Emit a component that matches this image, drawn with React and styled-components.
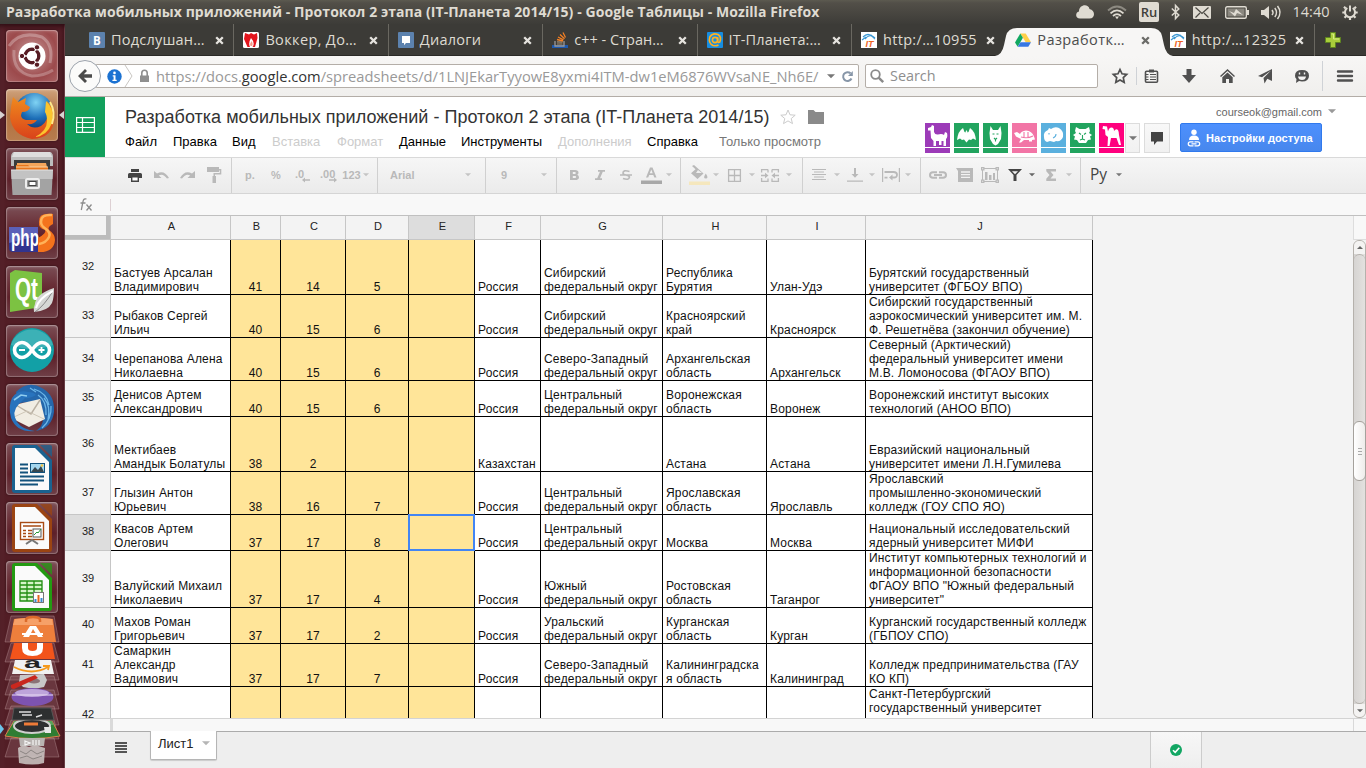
import React from "react";
import styled, { createGlobalStyle, css } from "styled-components";

const Global = createGlobalStyle`
  * { box-sizing: border-box; }
  body { margin: 0; background: #fff; overflow: hidden; font-family: "Liberation Sans", Arial, sans-serif; }
  svg { display: block; flex: none; overflow: visible; }
`;

/* ---------- desktop shell ---------- */
const Screen = styled.div`
  width: 1366px;
  height: 768px;
  display: flex;
  flex-direction: column;
  overflow: hidden;
`;
const Panel = styled.header`
  height: 24px;
  flex: none;
  display: flex;
  align-items: center;
  padding-left: 6px;
  background: linear-gradient(#5c5a50 0, #524f48 3px, #3d3c38 24px);
  color: #dfdbd2;
  font-family: "Open Sans", sans-serif;
`;
const WindowTitle = styled.div`
  width: 1069px;
  font-size: 14px;
  font-weight: 700;
  line-height: 24px;
  letter-spacing: 0.077px;
  white-space: nowrap;
`;
const Indicator = styled.div`
  width: ${(p) => p.$w}px;
  height: 24px;
  display: flex;
  align-items: center;
  justify-content: center;
  color: #dfdbd2;
`;
const Clock = styled.span`
  font-size: 14.500px;
  line-height: 24px;
`;
const Lang = styled.span`
  width: 20px;
  height: 20px;
  border-radius: 2px;
  background: #dfdbd2;
  color: #403f3a;
  font-size: 13px;
  font-weight: 600;
  line-height: 20px;
  text-align: center;
`;
const Body = styled.div`
  flex: 1;
  min-height: 0;
  display: flex;
`;
const Launcher = styled.nav`
  width: 65px;
  flex: none;
  padding: 6px 0 0;
  display: flex;
  flex-direction: column;
  background: linear-gradient(90deg, rgba(255, 255, 255, 0.03), transparent 6px, transparent 60px, rgba(30, 0, 10, 0.25)), #521d25;
  box-shadow: inset 0 5px 5px -3px #2c0c12, inset -1px 0 #6e4349;
`;
const TileRow = styled.div`
  height: 59px;
  flex: none;
  display: flex;
  align-items: flex-start;
`;
const Pip = styled.div`
  width: 6px;
  height: 52px;
  display: flex;
  align-items: center;
  justify-content: ${(p) => (p.$end ? "flex-end" : "flex-start")};
`;
const Tile = styled.div`
  width: 52px;
  height: 52px;
  border-radius: 4px;
  background: ${(p) => p.$bg || "linear-gradient(#7b4f56, #6a3038 35%, #5d2029 60%, #6f3f47)"};
  box-shadow: inset 0 0 0 1px rgba(255, 255, 255, 0.2), inset 0 1px 3px rgba(255, 255, 255, 0.3), 0 0 2px rgba(0, 0, 0, 0.5);
`;
const Browser = styled.main`
  width: 1301px;
  display: flex;
  flex-direction: column;
`;

/* ---------- browser chrome ---------- */
const TabStrip = styled.div`
  height: 32px;
  flex: none;
  padding-left: 15px;
  display: flex;
  background: #3c3b37;
  border-bottom: 1px solid #2b2a27;
  font-family: "Open Sans", sans-serif;
`;
const TabBox = styled.div`
  width: 154.4px;
  height: 32px;
  flex: none;
  position: relative;
  display: flex;
  align-items: center;
  padding: 4px 0 4px 9px;
  color: ${(p) => (p.$active ? "#4c4c4c" : "#dfdbd2")};
  border-right: ${(p) => (p.$noline ? "0" : "1px solid #6a6861")};
`;
const TabShape = styled.svg`
  position: absolute;
  left: -11px;
  top: 3px;
`;
const Favicon = styled.div`
  width: 16px;
  height: 16px;
  margin-right: 6px;
  flex: none;
  position: relative;
`;
const TabLabel = styled.span`
  width: 102px;
  flex: none;
  position: relative;
  font-size: 14.5px;
  line-height: 20px;
  letter-spacing: ${(p) => p.$ls || 0}px;
  white-space: nowrap;
`;
const TabClose = styled.span`
  position: relative;
  width: 12px;
  display: flex;
  justify-content: center;
`;
const NewTab = styled.div`
  width: 36px;
  display: flex;
  align-items: center;
  justify-content: center;
`;
const NavBar = styled.div`
  height: 41px;
  flex: none;
  display: flex;
  align-items: center;
  background: linear-gradient(#f7f6f5, #f0efed);
  border-bottom: 1px solid #b3ada7;
  font-family: "Open Sans", sans-serif;
`;
const BackButton = styled.div`
  width: 32px;
  height: 32px;
  flex: none;
  margin-left: 4px;
  position: relative;
  border-radius: 50%;
  border: 1px solid #9ca3ac;
  background: #fbfbfa;
  display: flex;
  align-items: center;
  justify-content: center;
`;
const UrlBar = styled.div`
  width: 764px;
  height: 24px;
  margin-left: -6px;
  flex: none;
  display: flex;
  align-items: center;
  padding-left: 11px;
  background: #fff;
  border: 1px solid #b4aea8;
  border-radius: 2px;
`;
const Url = styled.span`
  width: 666px;
  margin-left: 6px;
  overflow: hidden;
  font-size: 14.7px;
  line-height: 22px;
  white-space: nowrap;
  color: #999;
  b { font-weight: 400; color: #333; }
`;
const UrlTool = styled.span`
  width: 17px;
  display: flex;
  justify-content: center;
`;
const SearchBar = styled.div`
  width: 233px;
  height: 24px;
  margin-left: 6px;
  margin-right: 6px;
  flex: none;
  display: flex;
  align-items: center;
  gap: 6px;
  padding-left: 4px;
  background: #fff;
  border: 1px solid #b4aea8;
  border-radius: 2px;
  color: #8e8e8e;
  font-size: 14.4px;
  line-height: 22px;
`;
const NavTool = styled.div`
  width: ${(p) => p.$w || 38}px;
  display: flex;
  align-items: center;
  justify-content: center;
  color: #505050;
`;
const NavLine = styled.div`
  width: 1px;
  height: ${(p) => p.$h}px;
  background: #cfd2d6;
`;

/* ---------- document header ---------- */
const DocHeader = styled.section`
  height: 60px;
  flex: none;
  display: flex;
  background: #fff;
`;
const SheetLogo = styled.div`
  width: 40px;
  height: 60px;
  padding-bottom: 4px;
  display: flex;
  align-items: center;
  justify-content: center;
  background: #12a05c;
`;
const DocInfo = styled.div`
  width: 820px;
  padding-left: 20px;
`;
const TitleRow = styled.div`
  display: flex;
  align-items: center;
  height: 40px;
`;
const DocTitle = styled.h1`
  margin: 0;
  width: 655px;
  font-size: 18px;
  font-weight: 400;
  line-height: 40px;
  letter-spacing: 0.018px;
  color: #333;
  white-space: nowrap;
`;
const MenuRow = styled.div`
  display: flex;
  height: 15px;
  margin-top: -3px;
`;
const MenuItem = styled.span`
  width: ${(p) => p.$w}px;
  flex: none;
  font-size: 13px;
  line-height: 15px;
  white-space: nowrap;
  color: ${(p) => (p.$off ? "#ccc" : p.$note ? "#777" : "#000")};
`;
const Account = styled.div`
  width: 441px;
`;
const Mail = styled.div`
  height: 26px;
  padding: 3px 30px 0 0;
  display: flex;
  align-items: center;
  justify-content: flex-end;
  gap: 6px;
  font-size: 11px;
  color: #666;
`;
const Collab = styled.div`
  display: flex;
  align-items: flex-start;
`;
const Avatar = styled.div`
  width: 25px;
  height: 30px;
  margin-right: 4px;
  background: linear-gradient(${(p) => p.$c} 24px, #fff 24px, #fff 25px, ${(p) => p.$c} 25px);
`;
const GreyButton = styled.div`
  width: ${(p) => p.$w}px;
  height: 30px;
  margin-left: ${(p) => p.$ml}px;
  display: flex;
  align-items: center;
  justify-content: center;
  border: 1px solid #dcdcdc;
  background: linear-gradient(#f8f8f8, #f1f1f1);
`;
const Share = styled.div`
  width: 142px;
  height: 29px;
  margin-left: 10px;
  padding-left: 6px;
  display: flex;
  align-items: center;
  gap: 5px;
  border: 1px solid #3079ed;
  border-radius: 2px;
  background: linear-gradient(#4d90fe, #4787ed);
  color: #fff;
  font-size: 11px;
  font-weight: 700;
  letter-spacing: 0.08px;
  white-space: nowrap;
`;

/* ---------- toolbar ---------- */
const Toolbar = styled.div`
  height: 37px;
  flex: none;
  display: flex;
  border-top: 1px solid #d9d9d9;
  border-bottom: 1px solid #d5d5d5;
  background: linear-gradient(#f6f6f6, #ebebeb);
`;
const Group = styled.div`
  display: flex;
  width: ${(p) => p.$w}px;
  flex: none;
  padding-left: ${(p) => p.$pl || 0}px;
  border-right: ${(p) => (p.$last ? "0" : "1px solid #d0d0d0")};
`;
const Slot = styled.div`
  width: ${(p) => p.$w}px;
  height: 34px;
  flex: none;
  display: flex;
  align-items: center;
  justify-content: ${(p) => (p.$left ? "flex-start" : "center")};
  color: ${(p) => (p.$dark ? "#444" : "#b9b9b9")};
  font-size: 11px;
  font-weight: 700;
  white-space: nowrap;
`;
const PySign = styled.span`
  font-family: "Open Sans", sans-serif;
  font-size: 15.5px;
  font-weight: 400;
  color: #444;
  padding: 0 3px 3px 0;
`;
const FormulaBar = styled.div`
  height: 22px;
  flex: none;
  display: flex;
  align-items: center;
  padding-left: 14px;
  background: #f8f8f8;
  border-bottom: 1px solid #c0c0c0;
`;
const Caret = styled.div`
  width: 1px;
  height: 12px;
  margin-left: 17px;
  background: #ddd0d3;
`;

/* ---------- grid ---------- */
const SheetArea = styled.div`
  height: 502px;
  flex: none;
  display: flex;
  background: #f3f3f3;
`;
const Sheet = styled.div`
  width: 1288px;
  height: 502px;
  overflow: hidden;
`;
const HeadRow = styled.div`
  display: flex;
  height: 24px;
  width: 1028px;
`;
const Corner = styled.div`
  width: 46px;
  border-right: 1px solid #c6c6c6;
  border-bottom: 1px solid #c6c6c6;
  background: #f3f3f3;
  box-shadow: inset -4px -4px #bcbcbc;
`;
const HeadCell = styled.div`
  width: ${(p) => p.$w}px;
  padding-left: 2px;
  border-right: 1px solid #c6c6c6;
  border-bottom: 1px solid #c6c6c6;
  background: ${(p) => (p.$on ? "#ddd" : "#f3f3f3")};
  font-size: 11px;
  line-height: 21px;
  text-align: center;
  color: #222;
`;
const GridRow = styled.div`
  display: flex;
  height: ${(p) => p.$h}px;
  width: 1028px;
`;
const RowHead = styled.div`
  width: 46px;
  display: flex;
  align-items: center;
  justify-content: center;
  border-right: 1px solid #c6c6c6;
  border-bottom: 1px solid #c6c6c6;
  background: ${(p) => (p.$on ? "#ddd" : "#f3f3f3")};
  font-size: 11px;
  padding: 0 0 3px 1px;
  color: #222;
`;
const Cell = styled.div`
  width: ${(p) => p.$w}px;
  flex: none;
  position: relative;
  display: flex;
  flex-direction: column;
  justify-content: ${(p) => (p.$top ? "flex-start" : "flex-end")};
  padding: 0 0 0 3px;
  border-right: 1px solid #000;
  border-bottom: 1px solid #000;
  background: ${(p) => (p.$fill ? "#ffe599" : "#fff")};
  font-size: 12px;
  line-height: 14px;
  letter-spacing: 0.18px;
  white-space: pre;
  color: #111;
  ${(p) => p.$fill && css`padding: 0; text-align: center; letter-spacing: 0;`}
  ${(p) =>
    p.$selected &&
    css`
      &::after {
        content: "";
        position: absolute;
        inset: -1px;
        border: 2px solid #4285f4;
        z-index: 1;
      }
    `}
`;
const Scroll = styled.div`
  width: 13px;
  height: 502px;
  display: flex;
  flex-direction: column;
`;
const ScrollCap = styled.div`
  height: 24px;
  background: #f8f8f8;
  border-left: 1px solid #ddd;
  border-bottom: 1px solid #ddd;
`;
const ScrollTrack = styled.div`
  height: 478px;
  display: flex;
  flex-direction: column;
  border: 1px solid #b5b1ac;
  border-radius: 6px;
  background: linear-gradient(90deg, #d6d4d2, #e3e1df);
`;
const ScrollArrow = styled.div`
  height: 13px;
  display: flex;
  align-items: center;
  justify-content: center;
  background: #f4f3f2;
  border-radius: ${(p) => (p.$up ? "5px 5px 0 0" : "0 0 5px 5px")};
`;
const ScrollGap = styled.div`
  flex: ${(p) => p.$f} 0 0;
  border: 0 solid #b5b1ac;
  border-radius: ${(p) => (p.$up ? "6px 6px 0 0" : "0 0 6px 6px")};
  border-top-width: ${(p) => (p.$up ? 1 : 0)}px;
  border-bottom-width: ${(p) => (p.$up ? 0 : 1)}px;
`;
const Thumb = styled.div`
  height: 60px;
  margin: 0 -1px;
  display: flex;
  flex-direction: column;
  align-items: center;
  justify-content: center;
  gap: 2px;
  border: 1px solid #a5a19c;
  border-radius: 6px;
  background: linear-gradient(90deg, #fff, #eeecea);
  i { width: 4px; height: 1px; background: #aaa; }
`;

/* ---------- footer ---------- */
const ScrollFooter = styled.div`
  height: 13px;
  flex: none;
  display: flex;
  padding-left: 45px;
  border-top: 1px solid #d3d3d3;
  background: #f8f8f8;
`;
const FootGrip = styled.div`
  width: 3px;
  background: #dadada;
`;
const FootCorner = styled.div`
  margin-left: 1240px;
  width: 13px;
  border-left: 1px solid #d9d9d9;
`;
const SheetTabs = styled.footer`
  flex: 1;
  display: flex;
  align-items: flex-start;
  background: #eee;
  border-top: 1px solid #ababab;
`;
const AllSheets = styled.div`
  width: 85px;
  padding: 10px 0 0 50px;
`;
const SheetTab = styled.div`
  width: 67px;
  height: 29px;
  margin-top: -1px;
  padding: 0 0 3px 7px;
  display: flex;
  align-items: center;
  gap: 9px;
  background: #fff;
  border: 1px solid #b5b5b5;
  border-top: 0;
  border-radius: 0 0 2px 2px;
  box-shadow: 0 1px 1px rgba(0, 0, 0, 0.15);
  font-size: 13px;
  color: #222;
  span { width: 35px; }
`;
const SaveState = styled.div`
  width: 52px;
  height: 37px;
  margin-left: 933px;
  padding-bottom: 2px;
  display: flex;
  align-items: center;
  justify-content: center;
  background: linear-gradient(#f7f7f7, #eee);
  border-left: 1px solid #ccc;
  border-right: 1px solid #ccc;
`;

/* ---------- drawings ---------- */
const Ico = ({ w = 16, h = 16, vb, children, ...r }) => (
  <svg width={w} height={h} viewBox={vb || `0 0 ${w} ${h}`} fill="currentColor" {...r}>{children}</svg>
);
const Down = ({ c = "#c4c4c4", w = 6 }) => (
  <svg width={w} height={w / 2 + 0.5} viewBox="0 0 8 4"><path d="M0 0h8L4 4z" fill={c} /></svg>
);

const IndicatorIcons = {
  cloud: <Ico w={18} h={14}><path d="M4 13.5C-1 13.5-.8 7.3 3 6.6 3-1 12.5-1.600 13.500 4c6 1 6 9.500 0 9.500z" /></Ico>,
  wifi: (
    <Ico w={20} h={15} fill="none" stroke="currentColor" strokeWidth="1.800">
      <path d="M1 5.500Q10-2.500 19 5.500" stroke="#8d8a82" /><path d="M3.500 8.300Q10 2.500 16.500 8.300" /><path d="M6 11Q10 7.300 14 11" /><path d="M8 11.600h4l-2 2.600z" fill="currentColor" stroke="none" />
    </Ico>
  ),
  bt: <Ico w={9} h={16} fill="none" stroke="currentColor" strokeWidth="1.500"><path d="M.8 4.500l7 6.500-3.300 3.500V1.500L7.800 5l-7 6.500" /></Ico>,
  mail: <Ico w={18} h={13}><rect width="18" height="13" rx="1" /><path d="M2.500 1.500L9 7.500l6.500-6M2.500 11.500l4.500-4.500M15.500 11.500L11 7" stroke="#4a4842" strokeWidth="1.200" fill="none" /></Ico>,
  battery: <Ico w={24} h={13}><rect x=".7" y=".7" width="20.600" height="11.600" rx="1.500" fill="none" stroke="currentColor" strokeWidth="1.400" /><rect x="22" y="4" width="2" height="5" /><rect x="2.500" y="2.500" width="17" height="8" fill="#8a877f" /><path d="M4 5l5 2 2-4 7 6-6-2-2 3.500z" /></Ico>,
  sound: <Ico w={20} h={15}><path d="M0 5h3l5-4v13l-5-4H0z" /><path d="M11 5q2 2.500 0 5M13.800 3q3.400 4.500 0 9M16.500 1q5 6.500 0 13" fill="none" stroke="currentColor" strokeWidth="1.500" /></Ico>,
  gear: (
    <Ico w={16} h={16} fill="none" stroke="currentColor">
      <path d="M5.300 4a5 5 0 1 0 5.400 0" strokeWidth="2" />
      <path d="M8 1.500v6" strokeWidth="2" />
      <path d="M3.700 4.500L2 2.800M12.300 4.500L14 2.800M3 8.500H.3M13 8.500h2.700M4.300 12l-1.800 1.800M11.700 12l1.800 1.800M8 13.500V16" strokeWidth="2.200" />
    </Ico>
  ),
};

const ItLogo = () => (
  <Ico>
    <rect width="16" height="16" fill="#fff" />
    <path d="M2 5q5-5 10 0M4 7q5-6 10-1M1 8l4-3M10 3l4 4" stroke="#3a97d3" strokeWidth="1.200" fill="none" />
    <text x="4.500" y="14.500" fontSize="9" fontWeight="700" fontStyle="italic" fill="#f0641e" fontFamily="Liberation Sans">IT</text>
  </Ico>
);
const favicons = {
  vk: <Ico><rect width="16" height="16" rx="1" fill="#5c82ae" /><text x="4" y="12.500" fontSize="11.500" fontWeight="700" fill="#fff" fontFamily="Open Sans">B</text></Ico>,
  fire: <Ico><rect width="16" height="16" rx="1.500" fill="#fff" /><path d="M2 1l4 1.500L8 1l3 1.500L14 1l.5 5L12 15H9.500q3-4-1.500-9-3 5-1 9H4.500L1 7z" fill="#e3151d" /><path d="M8.500 9q2 3 .5 5H7.500q-1-2.500 1-5z" fill="#f59a8a" /></Ico>,
  chat: <Ico><rect width="16" height="16" rx="1" fill="#5c82ae" /><path d="M4 4h8v7H8l-2 2.300V11H4z" fill="#fff" /></Ico>,
  so: <Ico><path d="M0 14.500h16" stroke="#1d5ab0" strokeWidth="3" /><path d="M3 9v5h9V9" fill="none" stroke="#999" strokeWidth="1.300" /><path d="M5 12h5.500M5 9.800l5.500.4" stroke="#a39076" strokeWidth="1.200" /><path d="M5 7.500l6 1.500M6 5l5.500 2.800M8 2.500l4.500 4.200M11 .5l2.500 5" stroke="#f48024" strokeWidth="1.300" /></Ico>,
  at: <Ico><rect width="16" height="16" rx="1" fill="#168de2" /><circle cx="8" cy="8" r="2.600" fill="none" stroke="#ffb01f" strokeWidth="1.600" /><path d="M10.700 5.300v4q.3 1.800 2 .8Q15 5 11 2.500 5.500.5 2.800 5 1 11 6 13.500q3 .8 5.500-.5" fill="none" stroke="#ffb01f" strokeWidth="1.600" /></Ico>,
  it: <ItLogo />,
  drive: <Ico><path d="M5.300 1.500h5.400L16 10.200h-5.300z" fill="#ffcf48" /><path d="M5.300 1.500L0 10.400l2.700 4.300 5.200-8.900z" fill="#11a861" /><path d="M5.500 10.200H16l-2.700 4.500H2.700z" fill="#3777e3" /></Ico>,
};
const Cross = ({ c }) => <svg width="9" height="9" viewBox="0 0 9 9"><path d="M1.200 1.200l6.600 6.600M7.800 1.200L1.200 7.800" stroke={c} strokeWidth="2.300" /></svg>;

const tabs = [
  ["vk", "Подслушан…", 0.22], ["fire", "Воккер, До…", 0.36], ["chat", "Диалоги", 0.25], ["so", "c++ - Стран…", 0.03],
  ["at", "IT-Планета:…", 0.12], ["it", "http:/…10955", 0.33], ["drive", "Разработк…", 0.4], ["it", "http:/…12325", 0.4],
];

const LibreDoc = ({ c, d, children }) => (
  <Ico w={52} h={52}>
    <path d="M9 2h22l15 15v30q0 3-3 3H9q-3 0-3-3V5q0-3 3-3z" fill={c} />
    <path d="M34 2h10q2 0 2 2v10z" fill={c} opacity=".75" />
    <path d="M9 5h20l14 14v28H9z" fill="#fafafa" /><path d="M29 5v0l14 14z" fill={d} />
    {children}
  </Ico>
);
const launcherItems = [
  {
    bg: "radial-gradient(circle at 50% 45%, #c99a9a, #9c4a4c 65%, #a96163)",
    art: <Ico w={52} h={52}>
      <path d="M3 16Q14 0 36 7q12 8 8 26" fill="none" stroke="#fff" strokeOpacity=".28" strokeWidth="3" />
      <path d="M8 20q-2 22 18 26 12 0 21-6" fill="none" stroke="#fff" strokeOpacity=".25" strokeWidth="3" />
      <circle cx="26" cy="26" r="13.500" fill="#fff" />
      <circle cx="26" cy="26" r="6.800" fill="none" stroke="#571c24" strokeWidth="3.400" />
      <path d="M26 26h-10M26 26l5-8.700M26 26l5 8.700" stroke="#fff" strokeWidth="1.300" />
      <circle cx="26" cy="26" r="5" fill="#fff" />
      {[[16, 26], [31, 17.300], [31, 34.700]].map(([x, y]) => <circle key={y} cx={x} cy={y} r="2.700" fill="#571c24" stroke="#fff" strokeWidth="1" />)}
    </Ico>,
  },
  {
    bg: "linear-gradient(#cfa27c, #b0713f 50%, #b87c4e)", left: true, right: true,
    art: <Ico w={52} h={52}>
      <defs><radialGradient id="globe" cx=".55" cy=".25" r=".7"><stop offset="0" stopColor="#7fd3f4" /><stop offset=".6" stopColor="#1d6fb8" /><stop offset="1" stopColor="#123a78" /></radialGradient>
        <linearGradient id="fox" x1="0" y1="0" x2="0" y2="1"><stop offset="0" stopColor="#f08a1d" /><stop offset="1" stopColor="#d9421b" /></linearGradient></defs>
      <circle cx="28" cy="23" r="19" fill="url(#globe)" />
      <path d="M5 18L7 8l5 5 8-4-1 6 5 3q-1 5-8 5l-1 3q0 4 5 5 6 0 11 0-3 5-10 4 6 6 14 2 8-5 7-17l-1-8q7 7 7 17 0 20-22 21Q6 46 4 28z" fill="url(#fox)" />
      <path d="M40 12q9 8 6 22-5 13-17 14 12-6 12-16 0-6-2-9z" fill="#fbc52e" />
      <path d="M44 13q6 10 2 22" fill="none" stroke="#ffe98a" strokeWidth="2" />
    </Ico>,
  },
  {
    art: <Ico w={52} h={52}>
      <path d="M8 4h36q2 0 3 4v10H5V8q1-4 3-4z" fill="#bdbdbd" /><path d="M8 4h36l2 5H6z" fill="#dedede" />
      <rect x="8" y="12" width="36" height="13" fill="#3b3b3b" /><path d="M11 15h29l1 4H11z" fill="#f3a65b" /><path d="M10 17h12l2 2h18v4H10z" fill="#e8761b" /><path d="M10 19h32" stroke="#fbd5a5" />
      <path d="M5 22h42l-1.500 25h-39z" fill="#a3a3a3" /><path d="M5 22h42l-.5 9h-41z" fill="#c3c3c3" /><path d="M5 22h42" stroke="#e4e4e4" />
      <rect x="20" y="31" width="13" height="9" rx="1.500" fill="#999" stroke="#eee" strokeWidth="2" /><rect x="23" y="33.500" width="7" height="4" fill="#fff" stroke="#444" />
    </Ico>,
  },
  {
    art: <Ico w={52} h={52}>
      <path d="M3 20h29v25H7q-4 0-4-4z" fill="#31348f" /><path d="M3 20h29v9q-14 3-29 7z" fill="#5b60b8" />
      <text x="5" y="39" fontSize="23" fontWeight="700" fill="#fff" fontFamily="Liberation Sans" textLength="28" lengthAdjust="spacingAndGlyphs">php</text>
      <path d="M47 7q-15-2-14 8-1 6 6 8 2 3-7 8v14q16 1 17-12 0-6-6-10-2-3 4-6z" fill="#f4731c" /><path d="M46 8q-11-1-11 7 0 4 5 7 5 4 3 8-3 6-10 7" fill="none" stroke="#ffb35a" strokeWidth="2.500" />
    </Ico>,
  },
  {
    art: <Ico w={52} h={52}>
      <path d="M4 7l5-3 27 3v34L4 46z" fill="#7cc242" />
      <text x="9" y="34" fontSize="31" fontWeight="700" fill="#fff" fontFamily="Liberation Sans" textLength="23" lengthAdjust="spacingAndGlyphs">Qt</text>
      <path d="M48 22q-18 6-19 16-2 4-1 8 14-1 18-9 2-5 2-15z" fill="#d5d7d5" /><path d="M29 46q9-6 18-21" stroke="#888" fill="none" /><path d="M47 25q-14 7-17 17" stroke="#fff" fill="none" strokeWidth="2" />
    </Ico>,
  },
  {
    art: <Ico w={52} h={52}>
      <circle cx="26" cy="25" r="22" fill="#12a0a6" /><path d="M5 20a22 22 0 0 1 42 0q-20 8-42 0z" fill="#fff" opacity=".18" />
      <path d="M26 25q-5-7.500-10-7.500a7.500 7.500 0 0 0 0 15q5 0 10-7.500t10-7.500a7.500 7.500 0 0 1 0 15q-5 0-10-7.500z" fill="none" stroke="#fff" strokeWidth="3.600" />
      <path d="M13 25h6M32.500 25h6M35.500 22v6" stroke="#fff" strokeWidth="1.800" />
    </Ico>,
  },
  {
    art: <Ico w={52} h={52}>
      <path d="M10 8Q22-4 36 4q13 7 12 24-2 16-18 19 7-5 7-12l-5-18-18 2z" fill="#2567ab" />
      <path d="M8 21l26-6 5 20-16 8-16-8z" fill="#f1ede3" /><path d="M10 21l15 9 9-14" fill="none" stroke="#b9b0a2" strokeWidth="1.400" /><path d="M8 33l13-6 17 8" fill="none" stroke="#cfc7b8" />
      <path d="M6 14Q12 5 22 8q6 0 8 3-6 4-11 3l-6 6q-8 8-2 18 6 8 18 9Q11 49 5 34 2 22 6 14z" fill="#2873bd" />
      <path d="M28 5q13 4 15 16M32 11q9 6 8 20M24 4l6 4M45 22q1 13-9 22M38 14q7 8 4 22" fill="none" stroke="#6db6e8" strokeWidth="1.300" /><path d="M8 16l7-5 6 1" stroke="#8fcdf0" strokeWidth="1.600" fill="none" />
    </Ico>,
  },
  {
    art: <LibreDoc c="#1a6290" d="#b9d8ea">
      <path d="M14 21.500h8M14 25.500h8M14 29.500h8M14 33.500h24M14 37.500h24M14 41.500h18" stroke="#12527c" strokeWidth="1.800" /><rect x="24.500" y="20.500" width="14" height="9" fill="#a4d6ee" stroke="#12527c" /><path d="M25 29l4-5 3 3 3-4 3 6z" fill="#37474f" /><circle cx="36" cy="22.500" r="1.300" fill="#f4c542" />
    </LibreDoc>,
  },
  {
    art: <LibreDoc c="#9b4412" d="#e8c3a6">
      <rect x="14.500" y="20.500" width="23" height="17" fill="#fff" stroke="#a84b14" strokeWidth="1.400" /><path d="M17 24h18M17 28.500h3M17 31.500h3M17 34.500h3M22 28.500h4M22 31.500h4M22 34.500h4" stroke="#a84b14" strokeWidth="1.600" /><rect x="27" y="27" width="8" height="8" fill="#fff" stroke="#555" /><path d="M28 33l3-3 1 1 3-4" stroke="#2a9a3a" fill="none" /><path d="M20 42l6-4 6 4" fill="none" stroke="#777" strokeWidth="2" />
    </LibreDoc>,
  },
  {
    art: <LibreDoc c="#239a12" d="#bfe6b5">
      <rect x="14" y="20" width="22" height="20" fill="#d5f5c8" /><path d="M14 20h22v20H14zM14 24h22M14 28h22M14 32h22M14 36h22M21 20v20M28 20v20" fill="none" stroke="#1f8d10" strokeWidth="1.300" /><rect x="27.500" y="31.500" width="10" height="10" fill="#fff" stroke="#777" /><path d="M29.500 41v-3M35.500 41v-4" stroke="#3a8ad0" strokeWidth="2" /><path d="M32.500 41v-7" stroke="#e8641e" strokeWidth="2" />
    </LibreDoc>,
  },
];

/* Receding pile of icons at the foot of the launcher. */
const FoldedStack = () => (
  <svg width="65" height="148" viewBox="0 620 65 148">
    {[616, 643, 661, 676, 690, 706, 720, 738].map((y, i) => (
      <path key={y} d={`M11 ${y}h${43}l5 ${i ? 19 : 26}H5z`} fill="#a67b80" fillOpacity=".28" stroke="#c9a5a8" strokeOpacity=".35" />
    ))}
    <path d="M14 643h38l3 16H10z" fill="#f2541b" /><path d="M22 643v5q0 8 10.500 8T43 648v-5h-6v5q0 3-4.500 3t-4.500-3v-5z" fill="#fff" />
    <path d="M14 619q19-3 39 0l3 23H10z" fill="#ee7f3c" /><path d="M15 619q19-2 37 0l1 6H13z" fill="#f6a068" />
    <path d="M26 622v-2q0-3 7-3t7 3v2" fill="none" stroke="#dc6b2b" strokeWidth="2.500" />
    <path d="M23 637l7-11h6l7 11h-5l-5-8-4 8zM22 633h21v2H22z" fill="#fff" />
    <path d="M15 660h36l3 14H12z" fill="#f1f1f1" /><text x="24" y="668" fontSize="15" fontWeight="700" fill="#222" fontFamily="Liberation Sans" textLength="17" lengthAdjust="spacingAndGlyphs">a</text>
    <path d="M14 667q18 9 34 0M43 666h6l-1 4" fill="none" stroke="#f59a1c" strokeWidth="1.800" />
    <path d="M20 675l24-1 3 6-3 7-10 2-11-2-4-5z" fill="#c8c8c8" /><ellipse cx="34" cy="681" rx="6" ry="2.500" fill="#8a7376" /><path d="M11 685l24-10 3 3-24 11q-4 0-3-4z" fill="#c9271e" />
    <ellipse cx="32.500" cy="697" rx="21" ry="9" fill="#7d53b0" /><ellipse cx="32" cy="693" rx="17" ry="4" fill="#d9c8ec" opacity=".7" /><path d="M12 695h41" stroke="#e9dcf5" />
    <path d="M14 721h38l8 15q-28 5-55 0z" fill="#2f7d33" stroke="#d9804a" /><path d="M14 721h38l2 4H12z" fill="#5aa35b" />
    <ellipse cx="32" cy="726" rx="18" ry="7" fill="#2e2f31" stroke="#cfcfcf" strokeWidth="2" /><path d="M24 724h14" stroke="#ee7b38" strokeWidth="3" /><path d="M44 727h7v6h-6z" fill="#e7e7e7" />
    <path d="M14 708h37l3 12H12z" fill="#2d2f30" stroke="#555" /><path d="M19 712h12M22 715h10M36 717l6-2" stroke="#ddd" strokeWidth="1.500" />
    <path d="M19 738h26l-1 8H20z" fill="#b9b4b2" /><path d="M25 741l5 2-5 2zM33 740v5M36 740v5M39 740v5" stroke="#f5f5f5" fill="none" strokeWidth="1.200" />
    <path d="M18 748l5-3 6 2 6-2 10 3-1 15q-11 3-25 0z" fill="#cfcac8" opacity=".85" /><path d="M20 751l6 3 5-4 6 4 7-3M20 758l7-2 6 3 9-3" stroke="#8c8583" fill="none" />
    <path d="M0 724l4 5-4 5z" fill="#6cc5ea" />
  </svg>
);

/* Each anonymous visitor: tile colour, body, and face lines cut out of it. */
const animals = [
  ["#9c3bb8", "M3 5l3-1 1-2 2 1v6q1 3 4 2.500 4-1 6 .5l1-3 2 1q1 4-1 6v7h-2.500v-5h-2v4H14v-4h-3v5H8.500v-5L6 15 5.500 7.500 3 7.500z", ""],
  ["#22a45f", "M3 17Q4 8 9 5l1.500 4 1 .5.5-2h1l.5 2 1-.5L16 5q5 3 6 12l-3-1.500-2 1.500-2-.5-2.500 3-2.500-3-2 .5L6 15.500z", ""],
  ["#22a45f", "M7.500 3l2.500 4h5l2.500-4 1 7-.5 6-3 5-2.500 1.500L10 21l-3-5-.5-6z", "M9.500 11h2M13.500 11h2M11 15l1.500 1.500L14 15M12.500 16.500v2"],
  ["#f275a6", "M2 10l3-1 3 2q1-3 6-3.500 6 .5 8 6l1 3-3 .5v1.500h-3V17h-5l-3 2.500H7L9 16l-5-2.500z", "M9 14q6 2 12-1M12 9v6M16 9v6"],
  ["#5bb0de", "M3 14q-1-5 4-7l1-2 2 1q4-3 8-1 5 3 4 9-2 5-7 4l-2 1-4-1-3 1q-3-1-3-5z", "M8 10v1.500M12 15q3-1 3-4"],
  ["#22a45f", "M6 4l3.500 2h6L19 4l1 4-1 2 3 2-2 1.500 1 3-3 .5-2 3h-7l-2-3-3-.5 1-3L3 12l3-2-1-2z", "M9 10l2 1.500M16 10l-2 1.500M12.500 12v4M10 17l2.500-1 2.500 1"],
  ["#ff007e", "M4 3l4 .5 1 5q1-4 3.500-4T15 8q2-3 4-1 1 2 1 5l2 10h-2l-2.500-7H12l-1.500 8h-2L9 14 6.500 12 6 6.500 3.500 6z", ""],
];

/* ---------- sheet data ---------- */
const columns = [["A", 120], ["B", 50], ["C", 65], ["D", 63], ["E", 66], ["F", 66], ["G", 122], ["H", 104], ["I", 99], ["J", 227]];
const rows = [
  [32, 55, "Бастуев Арсалан\nВладимирович", "41", "14", "5", "Россия", "Сибирский\nфедеральный округ", "Республика\nБурятия", "Улан-Удэ", "Бурятский государственный\nуниверситет (ФГБОУ ВПО)"],
  [33, 43, "Рыбаков Сергей\nИльич", "40", "15", "6", "Россия", "Сибирский\nфедеральный округ", "Красноярский\nкрай", "Красноярск", "Сибирский государственный\nаэрокосмический университет им. М.\nФ. Решетнёва (закончил обучение)"],
  [34, 43, "Черепанова Алена\nНиколаевна", "40", "15", "6", "Россия", "Северо-Западный\nфедеральный округ", "Архангельская\nобласть", "Архангельск", "Северный (Арктический)\nфедеральный университет имени\nМ.В. Ломоносова (ФГАОУ ВПО)"],
  [35, 36, "Денисов Артем\nАлександрович", "40", "15", "6", "Россия", "Центральный\nфедеральный округ", "Воронежская\nобласть", "Воронеж", "Воронежский институт высоких\nтехнологий (АНОО ВПО)"],
  [36, 55, "Мектибаев\nАмандык Болатулы", "38", "2", "", "Казахстан", "", "Астана", "Астана", "Евразийский национальный\nуниверситет имени Л.Н.Гумилева"],
  [37, 43, "Глызин Антон\nЮрьевич", "38", "16", "7", "Россия", "Центральный\nфедеральный округ", "Ярославская\nобласть", "Ярославль", "Ярославский\nпромышленно-экономический\nколледж (ГОУ СПО ЯО)"],
  [38, 36, "Квасов Артем\nОлегович", "37", "17", "8", "Россия", "Центральный\nфедеральный округ", "Москва", "Москва", "Национальный исследовательский\nядерный университет МИФИ"],
  [39, 57, "Валуйский Михаил\nНиколаевич", "37", "17", "4", "Россия", "Южный\nфедеральный округ", "Ростовская\nобласть", "Таганрог", "Институт компьютерных технологий и\nинформационной безопасности\nФГАОУ ВПО \"Южный федеральный\nуниверситет\""],
  [40, 36, "Махов Роман\nГригорьевич", "37", "17", "2", "Россия", "Уральский\nфедеральный округ", "Курганская\nобласть", "Курган", "Курганский государственный колледж\n(ГБПОУ СПО)"],
  [41, 43, "Самаркин\nАлександр\nВадимович", "37", "17", "7", "Россия", "Северо-Западный\nфедеральный округ", "Калининградска\nя область", "Калининград", "Колледж предпринимательства (ГАУ\nКО КП)"],
  [42, 57, "", "", "", "", "", "", "", "", "Санкт-Петербургский\nгосударственный университет"],
];
const SheetRow = ({ row }) => {
  const [n, h, a, b, c, d, ...rest] = row;
  const cells = [a, b, c, d, "", ...rest];
  return (
    <GridRow $h={h}>
      <RowHead $on={n === 38}>{n}</RowHead>
      {cells.map((t, i) => (
        <Cell key={i} $w={columns[i][1]} $fill={i > 0 && i < 5} $top={n === 42} $selected={n === 38 && i === 4}>{t}</Cell>
      ))}
    </GridRow>
  );
};

const DocToolbar = () => (
  <Toolbar>
    <Group $w={167} $pl={56}>
      <Slot $w={27} $dark><Ico w={14} h={13}><path d="M3 0h8v3H3zM1.500 4h11q1.500 0 1.500 1.500V9h-3V7H3v2H0V5.500Q0 4 1.500 4z" /><path d="M3.700 7.700h6.600v4.600H3.700z" fill="#fff" stroke="#444" strokeWidth="1.400" /></Ico></Slot>
      <Slot $w={26}><Ico w={15} h={8}><path d="M0 0l3 2.600Q10-1.500 15 7l-2 .5Q9 2 4.800 4.500L7.500 7H0z" /></Ico></Slot>
      <Slot $w={27}><Ico w={15} h={8}><path d="M15 0l-3 2.600Q5-1.500 0 7l2 .5Q6 2 10.200 4.500L7.500 7H15z" /></Ico></Slot>
      <Slot $w={26}><Ico w={15} h={16}><path d="M0 0h12v5H0zM12 2h2.300v5.500H8V9h1v7H5.500V9h1V6h6.300V3.500H12z" /></Ico></Slot>
    </Group>
    <Group $w={146} $pl={5}>
      <Slot $w={26}>р.</Slot>
      <Slot $w={26}>%</Slot>
      <Slot $w={26}><Ico w={15} h={14}><text x="0" y="10" fontSize="11" fontWeight="700" fontFamily="Liberation Sans">.0</text><path d="M7 12l3-2.500v1.800h5v1.400h-5v1.800z" /></Ico></Slot>
      <Slot $w={26}><Ico w={17} h={14}><text x="0" y="10" fontSize="11" fontWeight="700" fontFamily="Liberation Sans">.00</text><path d="M17 12l-3-2.500v1.800H9v1.400h5v1.800z" /></Ico></Slot>
      <Slot $w={21}>123</Slot>
      <Slot $w={8}><Down /></Slot>
    </Group>
    <Group $w={108} $pl={12}><Slot $w={74} $left>Arial</Slot><Slot $w={8}><Down /></Slot></Group>
    <Group $w={71} $pl={15}><Slot $w={39} $left>9</Slot><Slot $w={8}><Down /></Slot></Group>
    <Group $w={124} $pl={4}>
      <Slot $w={26}><Ico w={9} h={10}><path fillRule="evenodd" d="M0 0h5q3.500 0 3.500 2.700 0 1.500-1.300 2Q9 5.300 9 7.200 9 10 5 10H0zM2.800 2v2h2q1 0 1-1t-1-1zM2.800 6v2h2.200q1.200 0 1.200-1T5 6z" /></Ico></Slot>
      <Slot $w={26}><Ico w={10} h={10}><path d="M3 0h7v1.800H7.800L5 8.200h2V10H0V8.200h2.200L5 1.800H3z" /></Ico></Slot>
      <Slot $w={26}><Ico w={12} h={10} fill="none" stroke="currentColor" strokeWidth="1.600"><path d="M9.500 1.600Q3-.5 3 3q0 1.500 3 2M6 5q3.500.8 3.500 2.200Q9 10.500 3 8.500M0 5h12" /></Ico></Slot>
      <Slot $w={25}><Ico w={21} h={18}><path d="M9 1.500h2.500l4 10h-2.200l-1-2.600H8.200l-1 2.600H5zm-.2 5.700h2.900L10.300 3.500z" /><rect y="14.500" width="21" height="3.500" fill="#a8a8a8" /></Ico></Slot>
      <Slot $w={9}><Down /></Slot>
    </Group>
    <Group $w={122} $pl={5}>
      <Slot $w={26}><Ico w={21} h={20}><path d="M3 1l2-1 9.500 8.500-6 5.500L2 8.300l4.500-4z" /><path d="M16.800 8.500q-3.300 5 0 5t0-5z" /><path d="M7 8h6L9 5z" fill="#eee" /><rect y="16.500" width="21" height="3.500" fill="#f5e7bd" /></Ico></Slot>
      <Slot $w={8}><Down /></Slot>
      <Slot $w={28}><Ico w={13} h={13} fill="none" stroke="currentColor" strokeWidth="1.300"><path d="M.6.6h11.800v11.800H.6zM6.500.6v11.800M.6 6.500h11.800" /></Ico></Slot>
      <Slot $w={8}><Down /></Slot>
      <Slot $w={28}><Ico w={18} h={13} fill="none" stroke="currentColor" strokeWidth="1.300"><path d="M7 .6H.6v3M.6 9v3.400H7V9.500M7 .6v3M11 .6h6.400v3M17.400 9v3.400H11V9.500M11 .6v3" /><path d="M0 6.500h5M18 6.500h-5" /><path d="M4 3.800v5.400l3.500-2.700zM14 3.800v5.400l-3.500-2.700z" fill="currentColor" stroke="none" /></Ico></Slot>
      <Slot $w={9}><Down /></Slot>
    </Group>
    <Group $w={118} $pl={3}>
      <Slot $w={26}><Ico w={14} h={12}><path d="M0 .5h14M2 3h10M0 5.500h14M2 8h10M0 10.500h14" stroke="currentColor" strokeWidth="1.200" /></Ico></Slot>
      <Slot $w={10}><Down /></Slot>
      <Slot $w={25}><Ico w={16} h={14}><path d="M7 0h2v6h2.500L8 9.800 4.500 6H7zM0 12.500h16v1.300H0z" /></Ico></Slot>
      <Slot $w={10}><Down /></Slot>
      <Slot $w={27}><Ico w={18} h={14}><path d="M.6 0v14M17.400 0v14" stroke="currentColor" strokeWidth="1.200" /><path d="M2.500 4h9q3.500 0 3.500 2.800T12 9.500h-2" fill="none" stroke="currentColor" strokeWidth="1.800" /><path d="M10.500 6.500v6L7 9.500zM2.500 8.700h3v1.800h-3z" /></Ico></Slot>
      <Slot $w={8}><Down /></Slot>
    </Group>
    <Group $w={160} $pl={3}>
      <Slot $w={27}><Ico w={18} h={8}><path d="M8 1.200H4q-3 0-3 2.800t3 2.800h4M10 1.200h4q3 0 3 2.800t-3 2.800h-4M5 4h8" fill="none" stroke="currentColor" strokeWidth="2" /></Ico></Slot>
      <Slot $w={26}><Ico w={17} h={14}><path d="M0 0h17v14H2V3z" /><path d="M5 4h9M5 6.700h9M5 9.400h9" stroke="#f2f2f2" strokeWidth="1.300" /></Ico></Slot>
      <Slot $w={26}><Ico w={18} h={16}><path d="M1.500 1.500h15v13h-15z" fill="none" stroke="currentColor" /><path d="M0 0h3.500v3.500H0zM14.500 0H18v3.500h-3.500zM0 12.500h3.500V16H0zM14.500 12.500H18V16h-3.500zM4 5h2.500v8H4zM8 8h2.500v5H8zM12 6h2v7h-2z" /><path d="M1.200 1.200h1v1h-1zM15.700 1.200h1v1h-1zM1.200 13.800h1v1h-1zM15.700 13.800h1v1h-1z" fill="#f2f2f2" /></Ico></Slot>
      <Slot $w={23} $dark><Ico w={14} h={12}><path d="M0 0h14L8.500 6v6h-3V6z" /><path d="M4 2.300h6L7 5.200z" fill="#f2f2f2" /></Ico></Slot>
      <Slot $w={11}><Down c="#666" /></Slot>
      <Slot $w={28}><Ico w={10} h={12}><path d="M.3 0H10v2.500H4.500L7.500 6l-3 3.500H10V12H.3V9.800L3.500 6 .3 2.300z" /></Ico></Slot>
      <Slot $w={7}><Down /></Slot>
    </Group>
    <Group $w={220} $pl={5} $last>
      <Slot $w={28} $dark><PySign>Py</PySign></Slot>
      <Slot $w={9}><Down c="#777" /></Slot>
    </Group>
  </Toolbar>
);

export default function App() {
  return (
    <Screen>
      <Global />
      <Panel>
        <WindowTitle>Разработка мобильных приложений - Протокол 2 этапа (IT-Планета 2014/15) - Google Таблицы - Mozilla Firefox</WindowTitle>
        <Indicator $w={20}>{IndicatorIcons.cloud}</Indicator>
        <Indicator $w={44}>{IndicatorIcons.wifi}</Indicator>
        <Indicator $w={20}><Lang>Ru</Lang></Indicator>
        <Indicator $w={32}>{IndicatorIcons.bt}</Indicator>
        <Indicator $w={22}>{IndicatorIcons.mail}</Indicator>
        <Indicator $w={48}>{IndicatorIcons.battery}</Indicator>
        <Indicator $w={20}>{IndicatorIcons.sound}</Indicator>
        <Indicator $w={60}><Clock>14:40</Clock></Indicator>
        <Indicator $w={18}>{IndicatorIcons.gear}</Indicator>
      </Panel>
      <Body>
        <Launcher>
          {launcherItems.map((it, i) => (
            <TileRow key={i}>
              <Pip>{it.left && <svg width="5" height="8" viewBox="0 0 5 8"><path d="M0 0l5 4-5 4z" fill="#d8d2d2" /></svg>}</Pip>
              <Tile $bg={it.bg}>{it.art}</Tile>
              <Pip $end>{it.right && <svg width="5" height="8" viewBox="0 0 5 8"><path d="M5 0L0 4l5 4z" fill="#d8d2d2" /></svg>}</Pip>
            </TileRow>
          ))}
          <FoldedStack />
        </Launcher>
        <Browser>
          <TabStrip>
            {tabs.map(([icon, label, ls], i) => (
              <TabBox key={i} $active={i === 6} $noline={i === 5 || i === 6}>
                {i === 6 && (
                  <TabShape width="178" height="29" viewBox="0 0 178 29">
                    <path d="M0 29Q7 28 9 18L11 9Q13 1 22 1H156Q165 1 167 9L169 18Q171 28 178 29z" fill="#f7f6f5" />
                  </TabShape>
                )}
                <Favicon>{favicons[icon]}</Favicon>
                <TabLabel $ls={ls}>{label}</TabLabel>
                <TabClose><Cross c={i === 6 ? "#6b6b68" : "#e6e4df"} /></TabClose>
              </TabBox>
            ))}
            <NewTab><Ico w={16} h={16}><path d="M5.500.5h5v5h5v5h-5v5h-5v-5h-5v-5h5z" fill="#a9ce3b" stroke="#5e8420" /><path d="M6.500 2h2v5H14" fill="none" stroke="#d7ee86" /></Ico></NewTab>
          </TabStrip>
          <NavBar>
            <BackButton><Ico w={14} h={14}><path d="M7 0L0 7l7 7 2-2-3.200-3.300H14V5.300H5.800L9 2z" fill="#4b4b4b" /></Ico></BackButton>
            <UrlBar>
              <Ico w={15} h={15}><circle cx="7.500" cy="7.500" r="7.200" fill="#1b72d2" /><circle cx="7.500" cy="3.900" r="1.300" fill="#fff" /><path d="M5.700 6.200h2.800v4.600h1.200v1.200H5.400v-1.200h1.200V7.400h-.9z" fill="#fff" /></Ico>
              <svg width="12" height="22" viewBox="0 0 12 22"><path d="M3 0l7 11-7 11" fill="none" stroke="#c9c6c2" /></svg>
              <svg width="16" height="14" viewBox="0 0 16 14"><path d="M6 13V6.500h1V4q0-3.500 3.500-3.500T14 4v2.500h1V13zM8.600 6.500h3.800V4q0-1.900-1.900-1.900T8.600 4z" fill="#8f8f8f" /></svg>
              <Url>https://docs.<b>google.com</b>/spreadsheets/d/1LNJEkarTyyowE8yxmi4ITM-dw1eM6876WVsaNE_Nh6E/</Url>
              <UrlTool><Down c="#777" w={8} /></UrlTool>
              <UrlTool><Ico w={11} h={11}><path d="M9.500 7.500A4.400 4.400 0 1 1 8.500 2.300" fill="none" stroke="#8796a8" strokeWidth="2" /><path d="M10.800 0v5H6z" fill="#8796a8" /></Ico></UrlTool>
            </UrlBar>
            <SearchBar>
              <Ico w={14} h={14} fill="none" stroke="#8a8a8a"><circle cx="5.500" cy="5.500" r="4.300" strokeWidth="1.800" /><path d="M8.600 8.600l4.600 4.600" strokeWidth="2.400" /></Ico>
              Search
            </SearchBar>
            <NavTool $w={32}><Ico w={16} h={16}><path d="M8 1.500l2 4.300 4.700.6-3.400 3.200.9 4.700L8 12l-4.200 2.300.9-4.700L1.300 6.400 6 5.800z" fill="none" stroke="currentColor" strokeWidth="1.700" /></Ico></NavTool>
            <NavLine $h={18} />
            <NavTool $w={30}><Ico w={15} h={14}><rect x="1.500" y="2.300" width="12" height="10.900" rx="1" fill="none" stroke="currentColor" strokeWidth="1.600" /><path d="M5 .5h5v3H5z" /><path d="M1 5.500h3.500M6 5.500h6M1 8h3.500M6 8h6M1 10.500h3.500M6 10.500h6" stroke="currentColor" strokeWidth="1.200" /></Ico></NavTool>
            <NavTool $w={46}><Ico w={14} h={14}><path d="M4.500 0h5v6H14l-7 8-7-8h4.500z" /></Ico></NavTool>
            <NavTool $w={30}><Ico w={15} h={14}><path d="M7.500 0L15 7l-1 1-6.500-6L1 8 0 7zM2.300 8.300l5.200-4.800 5.200 4.800V14H9v-4H6v4H2.300z" /></Ico></NavTool>
            <NavTool $w={46}><Ico w={14} h={15}><path d="M14 0v12L9.300 9.800 6.500 14.500 5.500 9 13 1.500 4 8.300 0 7z" /></Ico></NavTool>
            <NavTool $w={30}><Ico w={14} h={13}><path d="M7 0q7 0 7 5.700T7 11.500L4 11l-3 2 .5-4Q0 8 0 5.700 0 0 7 0z" /><path d="M3 6.500h8Q10.500 10 7 10T3 6.500z" fill="#f4f3f2" /><path d="M4.500 2.500v2M9.500 2.500v2" stroke="#f4f3f2" strokeWidth="1.400" /></Ico></NavTool>
            <NavTool $w={5} />
            <NavLine $h={30} />
            <NavTool $w={43}><Ico w={16} h={12}><path d="M1 1.500h14M1 6h14M1 10.500h14" stroke="currentColor" strokeWidth="2.400" strokeLinecap="round" /></Ico></NavTool>
          </NavBar>

          <DocHeader>
            <SheetLogo><Ico w={19} h={16} fill="none" stroke="#fff" strokeWidth="1.200"><path d="M.6.600h17.800v14.800H.6zM.6 5.500h17.800M.6 10.500h17.800M6.500.600v14.800" /></Ico></SheetLogo>
            <DocInfo>
              <TitleRow>
                <DocTitle>Разработка мобильных приложений - Протокол 2 этапа (IT-Планета 2014/15)</DocTitle>
                <Ico w={16} h={16}><path d="M8 1l2 4.800 5.200.4-4 3.400 1.300 5L8 11.900l-4.500 2.700 1.300-5-4-3.400L6 5.800z" fill="none" stroke="#ccc" /></Ico>
                <Ico w={28} h={14}><path d="M12 0h5.500l2 2H28v12H12z" fill="#8a8a8a" /></Ico>
              </TitleRow>
              <MenuRow>
                <MenuItem $w={48}>Файл</MenuItem>
                <MenuItem $w={59}>Правка</MenuItem>
                <MenuItem $w={40}>Вид</MenuItem>
                <MenuItem $w={65} $off>Вставка</MenuItem>
                <MenuItem $w={62} $off>Формат</MenuItem>
                <MenuItem $w={62}>Данные</MenuItem>
                <MenuItem $w={97}>Инструменты</MenuItem>
                <MenuItem $w={89} $off>Дополнения</MenuItem>
                <MenuItem $w={72}>Справка</MenuItem>
                <MenuItem $w={120} $note>Только просмотр</MenuItem>
              </MenuRow>
            </DocInfo>
            <Account>
              <Mail><span>courseok@gmail.com</span><Down c="#999" w={8} /></Mail>
              <Collab>
                {animals.map(([c, d, face], i) => (
                  <Avatar key={i} $c={c}><Ico w={25} h={24} fill="#fff"><path d={d} /><path d={face} fill="none" stroke={c} strokeWidth="1.100" /></Ico></Avatar>
                ))}
                <GreyButton $w={15} $ml={-3}><Down c="#777" w={8} /></GreyButton>
                <GreyButton $w={26} $ml={4}><Ico w={14} h={13}><path d="M1 0h12v9.500H7L4 13V9.500H1z" fill="#444" /></Ico></GreyButton>
                <Share>
                  <Ico w={14} h={18}><circle cx="7" cy="3.200" r="2.700" /><path d="M2 11q0-4.500 5-4.500t5 4.500z" /><path d="M6.500 12.800H3.300a2 2 0 0 0 0 4h3.200M7.500 12.800h3.200a2 2 0 0 1 0 4H7.500M4.500 14.800h5" fill="none" stroke="#fff" strokeWidth="1.300" /></Ico>
                  Настройки доступа
                </Share>
              </Collab>
            </Account>
          </DocHeader>

          <DocToolbar />
          <FormulaBar>
            <Ico w={14} h={14} fill="none" stroke="#8c8c8c" strokeWidth="1.300"><path d="M7.500 1q-2.800-.8-3.400 2.200L2.300 12M1.500 5h5M7.500 6.500l5 6M12.500 6.500l-5 6" /></Ico>
            <Caret />
          </FormulaBar>
          <SheetArea>
            <Sheet>
              <HeadRow>
                <Corner />
                {columns.map(([n, w]) => <HeadCell key={n} $w={w} $on={n === "E"}>{n}</HeadCell>)}
              </HeadRow>
              {rows.map((r) => <SheetRow key={r[0]} row={r} />)}
            </Sheet>
            <Scroll>
              <ScrollCap />
              <ScrollTrack>
                <ScrollArrow $up><svg width="6" height="3" viewBox="0 0 8 4"><path d="M0 4h8L4 0z" fill="#666" /></svg></ScrollArrow>
                <ScrollGap $f={167} $up />
                <Thumb><i /><i /><i /></Thumb>
                <ScrollGap $f={223} />
                <ScrollArrow><Down c="#666" /></ScrollArrow>
              </ScrollTrack>
            </Scroll>
          </SheetArea>
          <ScrollFooter><FootGrip /><FootCorner /></ScrollFooter>
          <SheetTabs>
            <AllSheets><Ico w={12} h={11}><path d="M0 1h12M0 4h12M0 7h12M0 10h12" stroke="#555" strokeWidth="1.800" /></Ico></AllSheets>
            <SheetTab><span>Лист1</span><Down c="#b5b5b5" w={8} /></SheetTab>
            <SaveState><Ico w={12} h={12}><circle cx="6" cy="6" r="6" fill="#12a663" /><path d="M3 6.200l2.200 2.200L9.300 3.800" fill="none" stroke="#fff" strokeWidth="1.600" /></Ico></SaveState>
          </SheetTabs>
        </Browser>
      </Body>
    </Screen>
  );
}
